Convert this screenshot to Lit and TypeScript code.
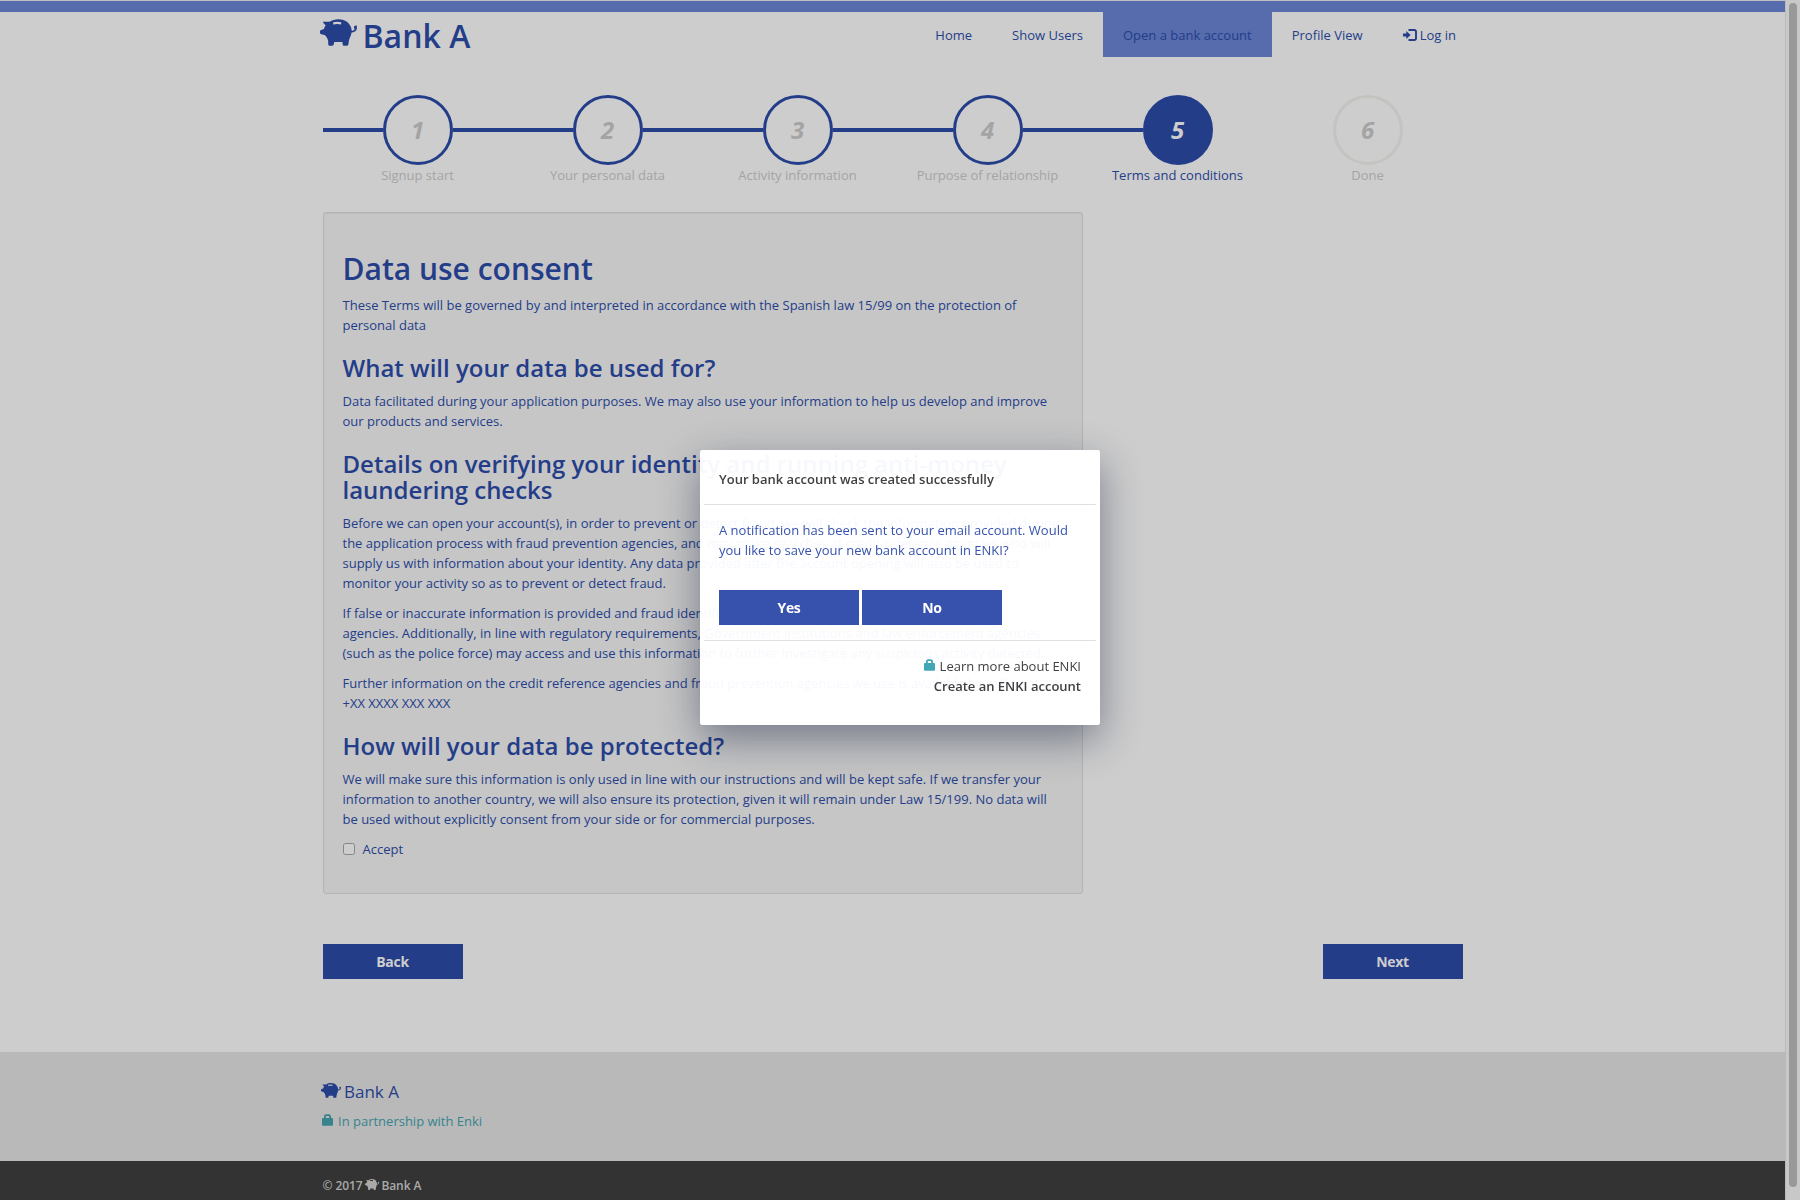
import { LitElement, html, css, svg } from "lit";
import { customElement, property } from "lit/decorators.js";
import { classMap } from "lit/directives/class-map.js";

const glyphs: Record<string, { box: string; art: unknown }> = {
  pig: {
    box: "0 0 37 27",
    art: svg`<path fill-rule="evenodd" fill="currentColor" d="M2.7 2.8H9.6C12 1 15 .2 18.3.2c6.200 0 10.600 2.800 12.500 7.600.5 1.300.8 2.600.8 3.800 2 .2 3.200-.5 2.700-2.100-.9-1.500.1-2.900 1.500-2.900 1.500.1 1 1.200 1.100 2 .3 3-2 5-5.300 4.800-.4 3-1.700 4.900-2.400 7.100-.4 1.700-.6 3.900-.8 5.100q-.2 1.100-1.300 1.100h-3.200q-1.200 0-1.200-1.200l-.3-2.400H14.200l-.5 2.500q-.2 1.100-1.400 1.100H9.600q-1.300 0-1.300-1.300l-.2-3.900C7.500 19.500 6.400 17.600 4.700 16l-3.600-.8Q0 15 0 13.800V12.300q0-1.100 1.100-1.300l2.900-.9c.3-1.600.8-2.700 1.900-3.800C4.700 5.600 3.400 4.400 2.700 2.800ZM13.200 3.200v2.300c2.700-.7 5.200-.7 8 0V3.200c-2.700-.7-5.300-.7-8 0Z"/>`,
  },
  bag: {
    box: "0 0 11 12",
    art: svg`<path fill-rule="evenodd" fill="currentColor" d="M2 4V2.400Q2 .2 4.200.2h2.600Q9 .2 9 2.400V4h1q1 0 1 1v5.800q0 1-1 1H1q-1 0-1-1V5q0-1 1-1ZM3.800 4h3.400V2.800q0-.8-.8-.8H4.600q-.8 0-.8.8Z"/>`,
  },
  login: {
    box: "0 0 14 12",
    art: svg`<path fill="currentColor" d="M0 4.600h3.300V2L7.600 6 3.300 10V7.400H0Z"/><path fill="none" stroke="currentColor" stroke-width="1.900" d="M5.500 1H11.200Q13 1 13 2.800V9.200Q13 11 11.200 11H5.500"/>`,
  },
};

@customElement("bank-glyph")
class BankGlyph extends LitElement {
  @property() name = "pig";
  static styles = css`
    :host { display: inline-block; flex: none; }
    .art { display: block; width: 100%; height: 100%; }
  `;
  render() {
    const g = glyphs[this.name];
    return html`<svg class="art" viewBox=${g.box} preserveAspectRatio="none" aria-hidden="true">${g.art}</svg>`;
  }
}

const steps = [
  "Signup start",
  "Your personal data",
  "Activity information",
  "Purpose of relationship",
  "Terms and conditions",
  "Done",
];
const current = 5;

@customElement("app-root")
class AppRoot extends LitElement {
  static styles = css`
    :host {
      display: block; position: relative; width: 1800px; height: 1200px; overflow: hidden;
      font: 13px/20px "Open Sans", sans-serif; color: #243d89;
    }
    * { box-sizing: border-box; }
    .screen { display: flex; height: 1200px; background: #cdcdcd; }
    .page { width: 1785px; height: 1200px; display: flex; flex-direction: column; border-top: 1px solid #c0c0c0; }
    .strip { height: 11px; background: #566cad; flex: none; }
    .wrap { width: 1140px; margin-left: 322.5px; }
    .header { height: 83px; display: flex; justify-content: space-between; align-items: flex-start; flex: none; }
    .brand { display: flex; margin-left: -2.5px; padding-top: 7px; }
    .brand .pig { width: 37px; height: 27px; }
    .name { font-size: 32px; line-height: 36px; font-weight: 600; margin: -1px 0 0 5.5px; white-space: nowrap; }
    .nav { display: flex; margin-right: -13.5px; height: 45px; }
    .link { display: flex; align-items: center; padding: 1px 20px 0; white-space: nowrap; }
    .link.active { background: #566cad; }
    .login { width: 14px; height: 12px; margin-right: 3px; }
    .steps { display: grid; grid-template-columns: repeat(6, 190px); height: 117px; flex: none; }
    .step { display: grid; grid-template-columns: 60px 70px 60px; grid-template-rows: 70px 20px; align-items: center; align-content: start; color: #a4a4a4; text-align: center; }
    .bar { height: 4px; background: #243d89; }
    .bar.off { visibility: hidden; }
    .dot { width: 70px; height: 70px; border-radius: 50%; border: 3px solid #243d89; display: flex; align-items: center; justify-content: center; font: italic bold 24px/30px "Open Sans", sans-serif; }
    .now .dot { background: #243d89; color: #cdcdcd; }
    .later .dot { border-color: #c3c3bf; }
    .now .label { color: #243d89; }
    .label { grid-column: 1 / 4; white-space: nowrap; }
    .panel { width: 760px; height: 682px; flex: none; padding: 39px 19px 0; background: #c6c6c6; border: 1px solid #b4b4b4; border-radius: 3px; box-shadow: inset 0 1px 1px rgba(0, 0, 0, .05); white-space: nowrap; }
    h1 { font-size: 30px; line-height: 33px; font-weight: 600; margin: 0 0 10px; }
    h2 { font-size: 24px; line-height: 26px; font-weight: 600; margin: 20px 0 10px; }
    p { margin: 0 0 10px; }
    .accept { display: flex; align-items: center; }
    .check { width: 12px; height: 12px; border: 1px solid #858585; border-radius: 2.500px; background: #cdcdcd; margin-right: 8px; }
    .actions { display: flex; justify-content: space-between; margin-top: 50px; height: 108px; flex: none; }
    .btn { width: 140px; height: 35px; background: #243d89; color: #cdcdcd; font-size: 14px; line-height: 35px; font-weight: 700; letter-spacing: -.3px; text-align: center; }
    .foot { height: 109px; background: #b9b9b9; padding-top: 29px; flex: none; }
    .fbrand { display: flex; font-size: 17px; line-height: 22px; margin-left: -1.5px; }
    .fbrand .pig { width: 20px; height: 15px; margin: 2px 3px 0 0; }
    .partner { display: flex; color: #37848e; margin: 8px 0 0 -.5px; }
    .bag { width: 11px; height: 12px; margin: 3px 5px 0 0; }
    .legal { height: 39px; background: #333; color: #aaa; font-size: 12px; font-weight: 600; flex: none; }
    .lrow { display: flex; padding-top: 15px; line-height: 19px; letter-spacing: -.1px; }
    .lrow .pig { width: 14px; height: 11px; margin: 3px 2px 0 3px; }
    .track { width: 15px; background: #c8c8c8; border-left: 1px solid #bababa; padding: 3px 0 0 3px; }
    .thumb { width: 8px; height: 1184px; border-radius: 4px; background: #999; }
    .modal { position: absolute; left: 700px; top: 450px; width: 400px; height: 275px; padding: 0 4px; background: rgba(255, 255, 255, .96); backdrop-filter: brightness(1.25); border-radius: 3px; box-shadow: 0 14px 40px rgba(20, 30, 60, .46); color: #3652ad; }
    .title { height: 55px; padding: 19px 15px 0; font-weight: 600; color: #404040; border-bottom: 1px solid #dfdfdf; }
    .body { height: 136px; padding: 15px 15px 0; white-space: nowrap; border-bottom: 1px solid #dfdfdf; }
    .pair { display: flex; gap: 3px; margin-top: 30px; }
    .pair .btn { background: rgba(42, 71, 168, .94); color: #fff; }
    .links { padding: 15px 15px 0; text-align: right; color: #404040; }
    .learn { display: flex; justify-content: flex-end; }
    .learn .bag { color: #41a6b6; }
    .strong { font-weight: 600; }
  `;

  render() {
    return html`
      <div class="screen">
        <div class="page">
          <div class="strip"></div>
          <header class="wrap header">
            <div class="brand"><bank-glyph class="pig" name="pig"></bank-glyph><span class="name">Bank A</span></div>
            <nav class="nav">
              <span class="link">Home</span>
              <span class="link">Show Users</span>
              <span class="link active">Open a bank account</span>
              <span class="link">Profile View</span>
              <span class="link"><bank-glyph class="login" name="login"></bank-glyph>Log in</span>
            </nav>
          </header>
          <div class="wrap steps">
            ${steps.map((label, i) => {
              const n = i + 1;
              return html`<div class=${classMap({ step: true, now: n === current, later: n > current })}>
                <div class=${classMap({ bar: true, off: n > current })}></div>
                <div class="dot">${n}</div>
                <div class=${classMap({ bar: true, off: n >= current })}></div>
                <div class="label">${label}</div>
              </div>`;
            })}
          </div>
          <main class="wrap">
            <section class="panel">
              <h1>Data use consent</h1>
              <p>These Terms will be governed by and interpreted in accordance with the Spanish law 15/99 on the protection of<br>personal data</p>
              <h2>What will your data be used for?</h2>
              <p>Data facilitated during your application purposes. We may also use your information to help us develop and improve<br>our products and services.</p>
              <h2>Details on verifying your identity and running anti-money<br>laundering checks</h2>
              <p>Before we can open your account(s), in order to prevent or detect fraud, we will check the information provided during<br>the application process with fraud prevention agencies, and may make searches at credit reference agencies who will<br>supply us with information about your identity. Any data provided after the account opening will also be used to<br>monitor your activity so as to prevent or detect fraud.</p>
              <p>If false or inaccurate information is provided and fraud identified, details will be shared with fraud prevention<br>agencies. Additionally, in line with regulatory requirements, Government institutions and law enforcement agencies<br>(such as the police force) may access and use this information to further investigate any suspicious activity detected.</p>
              <p>Further information on the credit reference agencies and fraud prevention agencies we use is available by calling at<br>+XX XXXX XXX XXX</p>
              <h2>How will your data be protected?</h2>
              <p>We will make sure this information is only used in line with our instructions and will be kept safe. If we transfer your<br>information to another country, we will also ensure its protection, given it will remain under Law 15/199. No data will<br>be used without explicitly consent from your side or for commercial purposes.</p>
              <div class="accept"><span class="check"></span>Accept</div>
            </section>
            <div class="actions"><div class="btn">Back</div><div class="btn">Next</div></div>
          </main>
          <footer class="foot">
            <div class="wrap">
              <div class="fbrand"><bank-glyph class="pig" name="pig"></bank-glyph>Bank A</div>
              <div class="partner"><bank-glyph class="bag" name="bag"></bank-glyph>In partnership with Enki</div>
            </div>
          </footer>
          <div class="legal">
            <div class="wrap lrow">© 2017<bank-glyph class="pig" name="pig"></bank-glyph>Bank A</div>
          </div>
        </div>
        <div class="track"><div class="thumb"></div></div>
      </div>
      <div class="modal" role="dialog">
        <div class="title">Your bank account was created successfully</div>
        <div class="body">
          <div>A notification has been sent to your email account. Would<br>you like to save your new bank account in ENKI?</div>
          <div class="pair"><div class="btn">Yes</div><div class="btn">No</div></div>
        </div>
        <div class="links">
          <div class="learn"><bank-glyph class="bag" name="bag"></bank-glyph>Learn more about ENKI</div>
          <div class="strong">Create an ENKI account</div>
        </div>
      </div>
    `;
  }
}
